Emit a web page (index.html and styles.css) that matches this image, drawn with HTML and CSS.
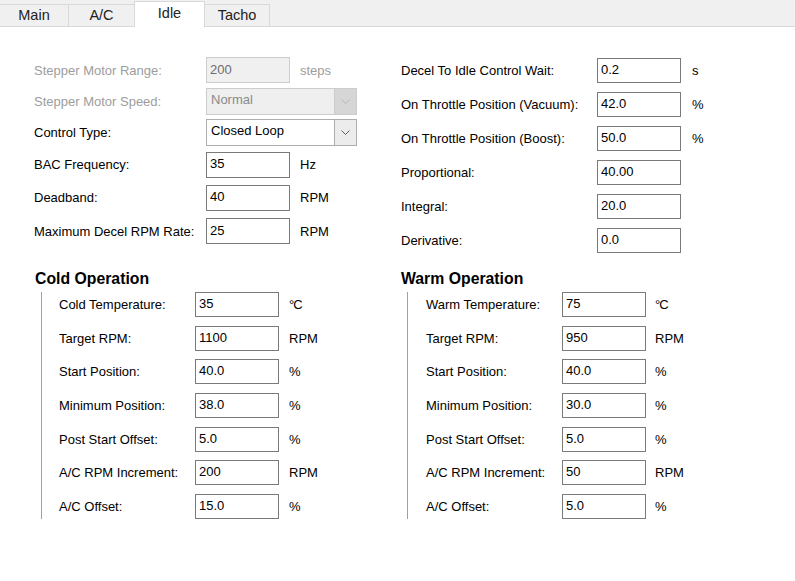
FILE: index.html
```html
<!DOCTYPE html>
<html lang="en">
<head>
  <meta charset="UTF-8">
  <title>Idle</title>
  <link rel="stylesheet" href="styles.css">
</head>
<body>
<div class="tabs">
  <div class="tab tab-main">Main</div>
  <div class="tab tab-ac">A/C</div>
  <div class="tab tab-idle active">Idle</div>
  <div class="tab tab-tacho">Tacho</div>
</div>

<div class="page">
  <!-- stepper / control settings -->
  <div class="fields basic">
    <label class="disabled">Stepper Motor Range:</label>
    <input type="text" value="200" disabled>
    <span class="unit disabled">steps</span>

    <label class="disabled">Stepper Motor Speed:</label>
    <div class="combo disabled">
      <span class="combo-value">Normal</span>
      <span class="combo-arrow"><svg width="9" height="5" viewBox="0 0 9 5"><polyline points="0.5,0.5 4.5,4.5 8.5,0.5" fill="none" stroke="currentColor"/></svg></span>
    </div>

    <label>Control Type:</label>
    <div class="combo">
      <span class="combo-value">Closed Loop</span>
      <span class="combo-arrow"><svg width="9" height="5" viewBox="0 0 9 5"><polyline points="0.5,0.5 4.5,4.5 8.5,0.5" fill="none" stroke="currentColor"/></svg></span>
    </div>

    <label>BAC Frequency:</label>
    <input type="text" value="35">
    <span class="unit">Hz</span>

    <label>Deadband:</label>
    <input type="text" value="40">
    <span class="unit">RPM</span>

    <label>Maximum Decel RPM Rate:</label>
    <input type="text" value="25">
    <span class="unit">RPM</span>
  </div>

  <!-- throttle / PID settings -->
  <div class="fields pid">
    <label>Decel To Idle Control Wait:</label>
    <input type="text" value="0.2">
    <span class="unit">s</span>

    <label>On Throttle Position (Vacuum):</label>
    <input type="text" value="42.0">
    <span class="unit">%</span>

    <label>On Throttle Position (Boost):</label>
    <input type="text" value="50.0">
    <span class="unit">%</span>

    <label>Proportional:</label>
    <input type="text" value="40.00">
    <span class="unit"></span>

    <label>Integral:</label>
    <input type="text" value="20.0">
    <span class="unit"></span>

    <label>Derivative:</label>
    <input type="text" value="0.0">
    <span class="unit"></span>
  </div>

  <section class="group cold">
    <h2>Cold Operation</h2>
    <div class="group-body">
      <label>Cold Temperature:</label>
      <input type="text" value="35">
      <span class="unit deg">°C</span>

      <label>Target RPM:</label>
      <input type="text" value="1100">
      <span class="unit">RPM</span>

      <label>Start Position:</label>
      <input type="text" value="40.0">
      <span class="unit">%</span>

      <label>Minimum Position:</label>
      <input type="text" value="38.0">
      <span class="unit">%</span>

      <label>Post Start Offset:</label>
      <input type="text" value="5.0">
      <span class="unit">%</span>

      <label>A/C RPM Increment:</label>
      <input type="text" value="200">
      <span class="unit">RPM</span>

      <label>A/C Offset:</label>
      <input type="text" value="15.0">
      <span class="unit">%</span>
    </div>
  </section>

  <section class="group warm">
    <h2>Warm Operation</h2>
    <div class="group-body">
      <label>Warm Temperature:</label>
      <input type="text" value="75">
      <span class="unit deg">°C</span>

      <label>Target RPM:</label>
      <input type="text" value="950">
      <span class="unit">RPM</span>

      <label>Start Position:</label>
      <input type="text" value="40.0">
      <span class="unit">%</span>

      <label>Minimum Position:</label>
      <input type="text" value="30.0">
      <span class="unit">%</span>

      <label>Post Start Offset:</label>
      <input type="text" value="5.0">
      <span class="unit">%</span>

      <label>A/C RPM Increment:</label>
      <input type="text" value="50">
      <span class="unit">RPM</span>

      <label>A/C Offset:</label>
      <input type="text" value="5.0">
      <span class="unit">%</span>
    </div>
  </section>
</div>
</body>
</html>
```

FILE: styles.css
```css
body {
    margin: 0;
    background-color: #fff;
    font-family: "Liberation Sans", Arial, sans-serif;
    font-size: 13px;
    color: #000;
}

/* tab strip */
.tabs {
    display: flex;
    align-items: flex-end;
    height: 26px;
    background-color: #f0f0f0;
    border-bottom: 1px solid #d9d9d9;
}

.tab {
    box-sizing: border-box;
    height: 22px;
    display: flex;
    align-items: center;
    justify-content: center;
    border: 1px solid #d9d9d9;
    border-bottom: none;
    border-left: none;
    font-size: 14.5px;
    color: #222;
    padding-bottom: 1px;
}

.tab-main { width: 69px; }
.tab-ac { width: 66px; }
.tab-idle { width: 71px; }
.tab-tacho { width: 65px; }

.tab.active {
    height: 26px;
    margin-bottom: -1px;
    background-color: #fff;
    border-left: 1px solid #d9d9d9;
    margin-left: -1px;
    align-items: flex-start;
    padding-top: 3px;
    padding-bottom: 0;
}

/* page content */
.page {
    display: grid;
    grid-template-columns: 367px 1fr;
    row-gap: 13px;
    padding: 26px 0 0 34px;
}

.fields {
    display: grid;
    align-items: center;
}

.basic {
    grid-template-columns: 162px 84px auto;
    grid-template-rows: 34px 29px 32px 33px 33px 34px;
    column-gap: 10px;
    align-self: start;
}

.pid {
    grid-template-columns: 185px 84px auto;
    grid-auto-rows: 34px;
    column-gap: 11px;
}

label {
    white-space: nowrap;
}

.disabled {
    color: #9d9d9d;
}

input {
    box-sizing: border-box;
    width: 84px;
    height: 25px;
    margin: 0;
    padding: 0 3px 2px;
    border: 1px solid #7a7a7a;
    font-family: inherit;
    font-size: 13px;
    color: #000;
    background-color: #fff;
    outline: none;
}

.basic input {
    height: 26px;
}

input:disabled {
    background-color: #f0f0f0;
    border-color: #cccccc;
    color: #6d6d6d;
}

.unit {
    white-space: nowrap;
}

.deg {
    letter-spacing: -1px;
}

/* combo box */
.combo {
    grid-column: 2 / 4;
    box-sizing: border-box;
    width: 151px;
    height: 27px;
    display: flex;
    border: 1px solid #adadad;
    background-color: #fff;
}

.combo-value {
    flex: 1;
    padding: 3px 0 0 4px;
}

.combo-arrow {
    width: 21px;
    display: flex;
    align-items: center;
    justify-content: center;
    border-left: 1px solid #adadad;
    background-color: #ececec;
    color: #606060;
}

.combo.disabled {
    border-color: #cccccc;
    background-color: #efefef;
}

.combo.disabled .combo-value {
    color: #8a8a8a;
}

.combo.disabled .combo-arrow {
    border-left-color: #cccccc;
    background-color: #d6d6d6;
    color: #b8b8b8;
}

/* cold / warm groups */
.group h2 {
    margin: 0;
    height: 18px;
    line-height: 18px;
    font-size: 15.8px;
    font-weight: bold;
}

.cold h2 {
    margin-left: 1px;
}

.group-body {
    display: grid;
    grid-auto-rows: 25px;
    row-gap: 8.7px;
    align-items: center;
    margin-top: 4px;
    border-left: 1px solid #a0a0a0;
}

.cold .group-body {
    grid-template-columns: 126px 84px auto;
    margin-left: 7px;
    padding-left: 17px;
    column-gap: 10px;
}

.warm .group-body {
    grid-template-columns: 127px 84px auto;
    margin-left: 6px;
    padding-left: 18px;
    column-gap: 9px;
}
```
